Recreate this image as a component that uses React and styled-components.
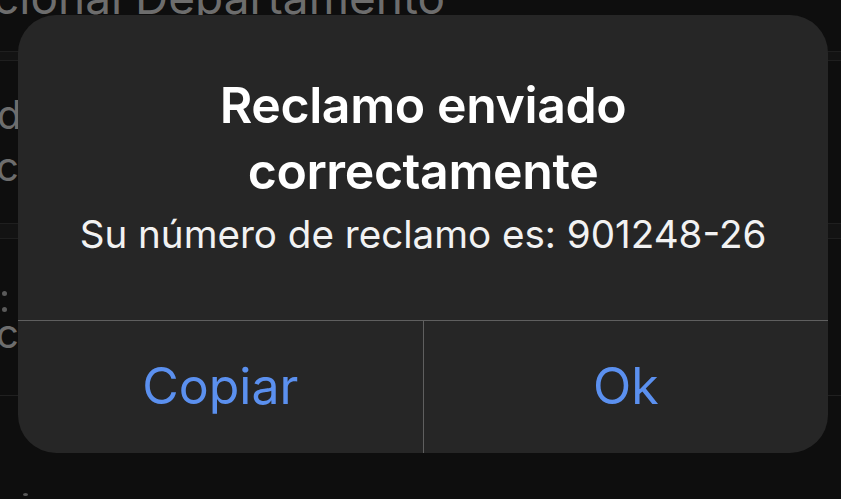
import React from "react";
import styled, { createGlobalStyle } from "styled-components";

const GlobalStyle = createGlobalStyle`
  html, body {
    margin: 0;
    padding: 0;
    background: #0e0e0e;
    overflow: hidden;
  }
  body {
    font-family: Inter, "Noto Sans", "Liberation Sans", sans-serif;
    -webkit-font-smoothing: antialiased;
  }
`;

const Screen = styled.div`
  position: relative;
  width: 841px;
  height: 499px;
  overflow: hidden;
  background: #0e0e0e;
`;

// the list that sits behind the alert
const List = styled.div`
  display: flex;
  flex-direction: column;
`;

const Row = styled.div`
  display: flex;
  flex-direction: column;
  height: ${(p) => p.$height}px;
  padding-top: ${(p) => p.$top || 0}px;
  box-sizing: border-box;
  border-bottom: ${(p) => (p.$line ? "1px solid #202020" : "none")};
`;

const Band = styled.div`
  height: ${(p) => p.$height}px;
  background: #131313;
  border-top: 1px solid #1f1f1f;
  border-bottom: 1px solid #1f1f1f;
  box-sizing: border-box;
`;

const BackText = styled.div`
  font-size: ${(p) => p.$size || 40}px;
  line-height: ${(p) => p.$lh || 52}px;
  color: #6d6d6d;
  white-space: nowrap;
  margin-left: ${(p) => p.$shift || 0}px;
`;

const Dot = styled.span`
  display: block;
  width: 5px;
  height: 5px;
  border-radius: 50%;
  background: #5a5a5a;
  margin-left: ${(p) => p.$x}px;
  margin-top: ${(p) => p.$y}px;
`;

const Alert = styled.div`
  position: absolute;
  top: 15px;
  left: 18px;
  width: 810px;
  height: 438px;
  background: #262626;
  border-radius: 38px;
  overflow: hidden;
  display: flex;
  flex-direction: column;
`;

const Content = styled.div`
  height: 306px;
  box-sizing: border-box;
  padding: 57px 40px 0;
  display: flex;
  flex-direction: column;
  align-items: center;
  text-align: center;
  border-bottom: 1px solid #5f5f5f;
`;

const Title = styled.div`
  color: #ffffff;
  font-size: 50px;
  font-weight: 600;
  line-height: 66px;
  letter-spacing: -0.4px;
`;

const Message = styled.div`
  margin-top: 6px;
  color: #f2f2f2;
  font-size: 38.6px;
  font-weight: 400;
  line-height: 48px;
`;

const Actions = styled.div`
  flex: 1;
  display: grid;
  grid-template-columns: 1fr 1px 1fr;
`;

const Divider = styled.div`
  background: #5f5f5f;
`;

const ActionButton = styled.button`
  border: none;
  background: transparent;
  color: #5b90ef;
  font-family: inherit;
  font-size: 50px;
  font-weight: 400;
  padding: 0 0 2px;
  display: flex;
  align-items: center;
  justify-content: center;
`;

export default function App() {
  return (
    <Screen>
      <GlobalStyle />
      <List>
        <Row $height={51}>
          <BackText $size={46} $lh={46} $shift={-7} style={{ marginTop: -26 }}>
            cional Departamento
          </BackText>
        </Row>
        <Band $height={10} />
        <Row $height={162} $top={28}>
          <BackText $lh={52} $shift={-3}>d</BackText>
          <BackText $lh={52} $shift={-4}>ci</BackText>
        </Row>
        <Band $height={16} />
        <Row $height={157} $line>
          <Dot $x={2} $y={52} />
          <Dot $x={2} $y={11} />
          <BackText $lh={44} $shift={-4}>ci</BackText>
        </Row>
        <Row $height={100}>
          <Dot $x={23} $y={97} />
        </Row>
      </List>

      <Alert>
        <Content>
          <Title>
            Reclamo enviado
            <br />
            correctamente
          </Title>
          <Message>Su número de reclamo es: 901248-26</Message>
        </Content>
        <Actions>
          <ActionButton>Copiar</ActionButton>
          <Divider />
          <ActionButton>Ok</ActionButton>
        </Actions>
      </Alert>
    </Screen>
  );
}
